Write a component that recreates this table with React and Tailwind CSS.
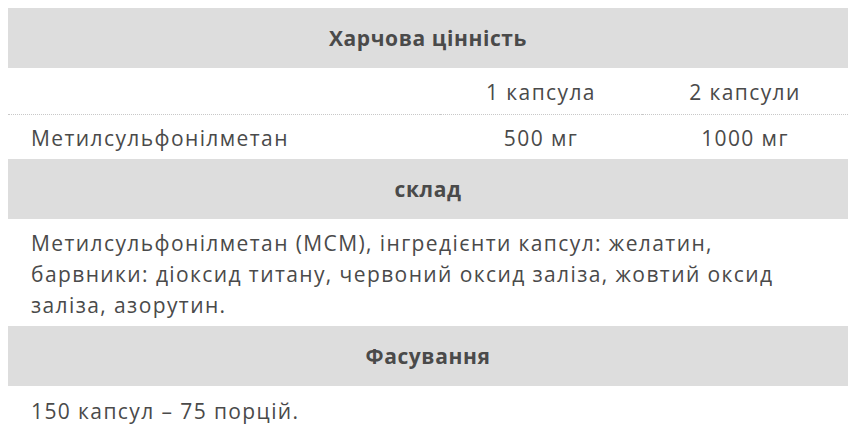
import React from 'react'

const head = 'h-[60px] bg-[#dddddd] text-center font-bold text-[#4a4a4a] p-0 pt-[2px] tracking-[0.6px]'

const App = () => {
  return (
    <div className="bg-white min-h-[435px] p-2 text-[21px] tracking-[1.4px] text-[#4a4a4a]" style={{ fontFamily: '"Open Sans", "Noto Sans", sans-serif' }}>
      <table className="w-[840px] border-collapse table-fixed">
        <colgroup>
          <col className="w-[432px]" />
          <col className="w-[202px]" />
          <col className="w-[206px]" />
        </colgroup>
        <tbody>
          <tr>
            <th colSpan={3} className={head}>Харчова цінність</th>
          </tr>
          <tr className="h-[46px] border-b border-dotted border-[#c8c8c8]">
            <td></td>
            <td className="text-center pt-[4px]">1 капсула</td>
            <td className="text-center pt-[4px]">2 капсули</td>
          </tr>
          <tr className="h-[45px]">
            <td className="pl-[23px] pt-[4px]">Метилсульфонілметан</td>
            <td className="text-center pt-[4px]">500 мг</td>
            <td className="text-center pt-[4px]">1000 мг</td>
          </tr>
          <tr>
            <th colSpan={3} className={head}>склад</th>
          </tr>
          <tr>
            <td colSpan={3} className="pl-[23px] pr-[40px] pt-[9px] pb-[5px] leading-[31px]">
              Метилсульфонілметан (МСМ), інгредієнти капсул: желатин, барвники: діоксид титану, червоний оксид заліза, жовтий оксид заліза, азорутин.
            </td>
          </tr>
          <tr>
            <th colSpan={3} className={head}>Фасування</th>
          </tr>
          <tr className="h-[48px]">
            <td colSpan={3} className="pl-[23px] pt-[3px]">150 капсул – 75 порцій.</td>
          </tr>
        </tbody>
      </table>
    </div>
  )
}

export default App
